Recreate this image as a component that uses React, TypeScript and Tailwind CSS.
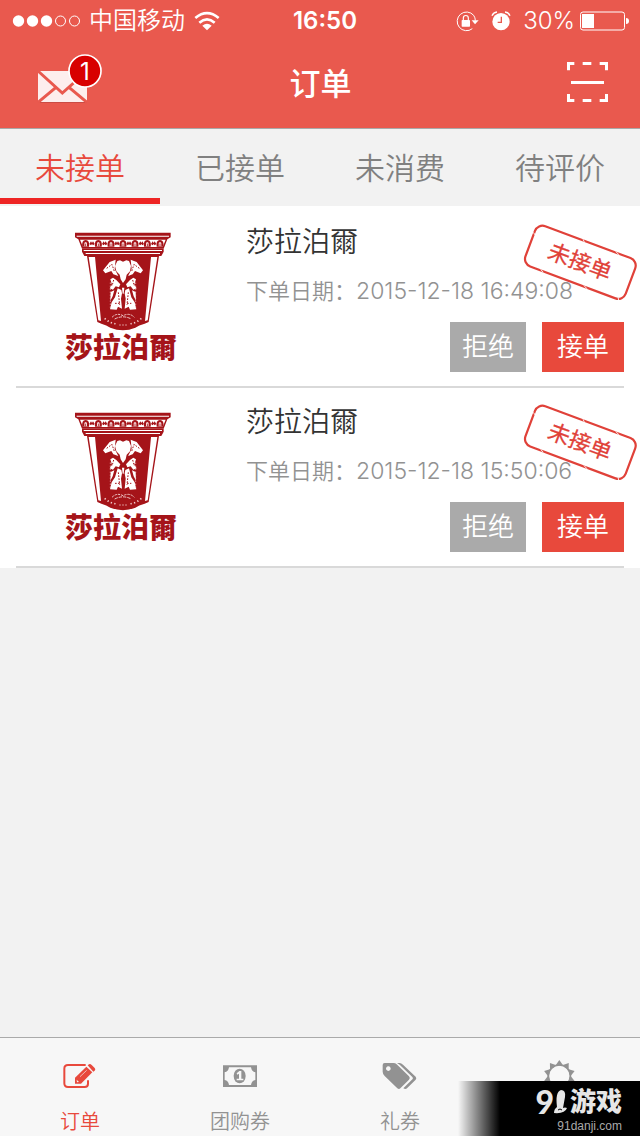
import { useState, type ReactNode } from "react";

type Order = {
  id: number;
  shop: string;
  date: string;
  status: string;
};

const orders: Order[] = [
  { id: 1, shop: "莎拉泊爾", date: "2015-12-18 16:49:08", status: "未接单" },
  { id: 2, shop: "莎拉泊爾", date: "2015-12-18 15:50:06", status: "未接单" },
];

const tabs = ["未接单", "已接单", "未消费", "待评价"];

function StatusBar() {
  return (
    <div className="grid h-10 grid-cols-[1fr_auto_1fr] items-center pl-3 pr-[10px] pt-px">
      <div className="flex items-center gap-[9px]">
        <svg width="68" height="14" viewBox="0 0 68 14" aria-hidden="true">
          <circle cx="6.5" cy="7" r="5.7" fill="#fff" />
          <circle cx="20.5" cy="7" r="5.7" fill="#fff" />
          <circle cx="34.5" cy="7" r="5.7" fill="#fff" />
          <circle cx="48.5" cy="7" r="5" fill="none" stroke="#fff" />
          <circle cx="62.5" cy="7" r="5" fill="none" stroke="#fff" />
        </svg>
        <span className="text-2xl font-[350]">中国移动</span>
        <svg width="26" height="20" viewBox="0 0 78 60" aria-hidden="true">
          <g fill="none" stroke="#fff" strokeWidth="8">
            <path d="M4 21 Q39 -8 74 21" />
            <path d="M16 35 Q39 15 62 35" />
          </g>
          <path d="M25 44 Q39 32 53 44 L39 58 Z" fill="#fff" />
        </svg>
      </div>
      <time className="pl-2 text-2xl font-semibold">16:50</time>
      <div className="flex items-center justify-end">
        <svg className="mr-3" width="24" height="22" viewBox="0 0 72 66" aria-hidden="true">
          <path d="M56 16 A28 28 0 1 0 52 56" fill="none" stroke="#fff" strokeWidth="3" />
          <path d="M56 16 Q61 23 61 32" fill="none" stroke="#fff" strokeWidth="3" />
          <path d="M50 31 H71 L60 43 Z" fill="#fff" />
          <rect x="20" y="30" width="25" height="20" rx="2" fill="#fff" />
          <path d="M25 31 V24 a7.500 7.500 0 0 1 15 0 V31" fill="none" stroke="#fff" strokeWidth="3.500" />
        </svg>
        <svg className="mr-3" width="20" height="20" viewBox="0 0 60 60" aria-hidden="true">
          <circle cx="30" cy="32" r="26" fill="#fff" />
          <path d="M3 14 Q7 4 18 3 M42 3 Q53 4 57 14" fill="none" stroke="#fff" strokeWidth="4" />
          <path d="M31 17 V34 H20" fill="none" stroke="#e9594e" strokeWidth="4" />
        </svg>
        <span className="mr-[5px] text-2xl font-[350]">30%</span>
        <svg width="50" height="20" viewBox="0 0 50 20" aria-hidden="true">
          <rect x="0.500" y="1" width="44" height="18" rx="2.500" fill="none" stroke="#fff" />
          <rect x="2" y="3" width="12" height="14" fill="#fff" />
          <path d="M46 7 Q49 7 49 10 T46 13 Z" fill="#fff" />
        </svg>
      </div>
    </div>
  );
}

function Header() {
  return (
    <header className="border-b border-[#a9a9a9] bg-[#e9594e] text-white">
      <StatusBar />
      <div className="grid h-[88px] grid-cols-[1fr_auto_1fr] items-center pl-[35px] pr-[30px]">
        <button type="button" aria-label="消息" className="justify-self-start">
          <svg width="70" height="68" viewBox="105 150 210 204">
            <rect x="116" y="215" width="145" height="94" fill="#b5453d" opacity="0.6" />
            <rect x="114" y="213" width="147" height="93" fill="#fdeeed" />
            <g fill="none" stroke="#e9594e" strokeWidth="9">
              <path d="M114 213 L187 279 L261 213" />
              <path d="M114 307 L168 262 M261 307 L207 262" />
            </g>
            <circle cx="255" cy="213" r="48" fill="#d80000" stroke="#fff" strokeWidth="5" />
            <text x="255" y="239" textAnchor="middle" fontSize="72" fontWeight="400" fill="#fff">
              1
            </text>
          </svg>
        </button>
        <h1 className="pr-1 text-[31px] font-medium">订单</h1>
        <button type="button" aria-label="扫一扫" className="justify-self-end">
          <svg width="45" height="48" viewBox="375 180 135 144">
            <g fill="none" stroke="#fff" strokeWidth="9">
              <path d="M385.500 211 V190.500 H403 M428 190.500 H454 M479 190.500 H499.500 V211" />
              <path d="M385.500 282 V301.500 H403 M428 301.500 H454 M479 301.500 H499.500 V282" />
              <path d="M393 247.500 H492" />
            </g>
          </svg>
        </button>
      </div>
    </header>
  );
}

function ShopLogo({ name }: { name: string }) {
  return (
    <svg width="140" height="150" viewBox="0 0 420 450" role="img" aria-label={name}>
      <g fill="#a51419">
        <path d="M75 38 H362 V52 L352 58 L341 86 H96 L85 58 L75 52 Z" />
        <path d="M96 86 H341 V95 L334 108 H103 L96 95 Z" />
        <path d="M111 108 H327 L296 306 L284 311 Q266 316 256 323 Q219 338 181 323 Q170 316 154 311 L142 306 Z" />
      </g>
      <g fill="#fff">
        <path d="M80 47 H357 V50 H80 Z" />
        <path d="M90 59 H347 L338 81 H99 Z" />
        <path d="M101 90 H336 V93 H101 Z" />
        <path d="M107 99 H330 V102 H107 Z" />
        <path d="M116 111 H135 L153 303 L145 301 Z" />
        <path d="M322 111 H303 L285 303 L293 301 Z" />
      </g>
      {/* frieze along the rim */}
      <g fill="#a51419">
        {[107, 145, 183, 219, 255, 292, 330].map((x) => (
          <g key={x}>
            <path d={`M${x - 10} 80 Q${x - 13} 61 ${x} 60 Q${x + 13} 61 ${x + 10} 80 Z`} />
            <path d={`M${x - 4} 79 V69 Q${x} 63 ${x + 4} 69 V79 H${x + 1} V71 H${x - 1} V79 Z`} fill="#f3d3d4" />
          </g>
        ))}
        {[126, 164, 201, 237, 274, 311].map((x) => (
          <path key={x} d={`M${x - 8} 72 L${x - 3} 64 L${x} 69 L${x + 3} 64 L${x + 8} 72 L${x + 3} 76 L${x} 72 L${x - 3} 76 Z`} />
        ))}
      </g>
      {/* engraving inside the pot */}
      <g fill="#fff">
        <path d="M202 123 L210 121 L219 125 L229 121 L237 123 L243 138 L240 154 L230 164 L227 178 L219 189 L212 178 L209 164 L199 154 L195 138 Z" />
        <path d="M197 119 L179 126 L159 151 L166 160 L184 153 L190 163 L205 168 L194 147 Z" />
        <path d="M242 119 L260 126 L279 151 L272 160 L255 153 L248 163 L234 168 L245 147 Z" />
        <path d="M181 178 L189 173 L199 180 L211 193 L207 202 L197 199 L189 209 L179 205 L186 194 Z" />
        <path d="M258 178 L250 173 L240 180 L228 193 L232 202 L242 199 L250 209 L260 205 L253 194 Z" />
        <path d="M203 205 L214 210 L216 220 L213 236 L216 266 L204 260 L200 269 L180 268 L185 247 L195 232 Z" />
        <path d="M237 205 L226 210 L224 220 L227 236 L224 266 L236 260 L240 269 L259 268 L254 247 L244 232 Z" />
        <path d="M182 216 L193 211 L188 229 L181 242 Z M257 216 L246 211 L251 229 L258 242 Z" />
        <path d="M216 203 H223 L221 221 H218 Z" />
      </g>
      <g fill="none" stroke="#a51419" strokeWidth="3" strokeDasharray="5 4">
        <path d="M170 145 L186 133 L193 154 M268 145 L252 133 L245 154" />
        <path d="M191 180 L186 198 M248 180 L253 198 M205 217 L209 255 M235 217 L231 255" />
        <path d="M195 250 H209 M231 250 H244" />
      </g>
      <g fill="none" stroke="#f0c9ca" strokeWidth="3">
        <path d="M181 188 V263 M257 188 V263" strokeDasharray="3 6" />
        <path d="M186 292 Q200 277 219 287 Q239 277 253 292" strokeDasharray="7 3" />
        <path d="M194 297 Q219 284 244 297" strokeDasharray="10 3" />
        <path d="M164 295 Q181 311 203 312 M274 295 Q257 311 235 312" strokeDasharray="4 7" strokeWidth="5" />
        <path d="M208 315 H233" strokeDasharray="4 5" />
      </g>
      <text x="213" y="415" textAnchor="middle" fontSize="84" fontWeight="900" fill="#a51419">
        {name}
      </text>
    </svg>
  );
}

function Stamp({ label }: { label: string }) {
  return (
    <svg
      className="absolute right-0 top-4 text-[#e04139]"
      width="118"
      height="78"
      viewBox="0 0 118 78"
      role="img"
      aria-label={label}
    >
      <g transform="rotate(20.500 59 38)">
        <rect x="5" y="17" width="107" height="43" rx="8" fill="none" stroke="currentColor" strokeWidth="2.200" />
        {/* worn spots in the ink */}
        <path
          d="M53 16 l2 2 M88 16 l4 2 M4 27 l3 2 M70 59 l4 2 M106 58 l2 3 M24 59 l3 2"
          stroke="#fff"
          strokeWidth="0.800"
        />
        <text x="58" y="46" textAnchor="middle" fontSize="22" fontWeight="400" fill="currentColor" stroke="currentColor" strokeWidth="0.300">
          {label}
        </text>
      </g>
    </svg>
  );
}

function OrderRow({ order }: { order: Order }) {
  const { shop, date, status } = order;

  return (
    <li className="relative px-4">
      <div className="flex h-[180px] border-b-2 border-[#d9d9d9] pt-3">
        <div className="w-[230px] shrink-0 pl-[34px]">
          <ShopLogo name={shop} />
        </div>
        <div className="flex flex-1 flex-col">
          <h2 className="text-[28px] font-[350] leading-[44px] text-[#333]">{shop}</h2>
          <p className="mt-[11px] whitespace-nowrap text-[22px] font-[350] leading-8 text-[#929292]">
            下单日期：<time className="text-[23px] font-[350]">{date}</time>
          </p>
          <div className="mt-[15px] flex justify-end gap-4 text-[26px] font-[350] leading-[50px] text-white">
            <button type="button" className="w-[76px] bg-[#aaa]">
              拒绝
            </button>
            <button type="button" className="w-[82px] bg-[#e8493c]">
              接单
            </button>
          </div>
        </div>
      </div>
      <Stamp label={status} />
    </li>
  );
}

function EditIcon() {
  return (
    <svg width="36" height="36" viewBox="186 84 108 108" aria-hidden="true">
      <path
        d="M257 105 H204 Q193 105 193 116 V160 Q193 171 204 171 H254 Q264 171 264 161 V151"
        fill="none"
        stroke="currentColor"
        strokeWidth="6"
      />
      <path d="M225 161 V143 L259 110 L277 127 L243 161 Z" fill="currentColor" />
      <path d="M263 106 L267 103 Q271 101 275 105 L284 114 Q288 118 284 122 L280 125 Z" fill="currentColor" />
      <path d="M240 140 L260 121" stroke="#f7f7f7" strokeWidth="2" />
      <path d="M230 149 L237 156 L231 157 Z" fill="#f7f7f7" />
    </svg>
  );
}

function MoneyIcon() {
  return (
    <svg width="36" height="36" viewBox="666 84 108 108" aria-hidden="true">
      <path
        d="M669 106 H771 V171 H669 Z M687 112 Q685 125 674 127 V150 Q685 152 687 165 H753 Q755 152 766 150 V127 Q755 125 753 112 Z"
        fill="currentColor"
        fillRule="evenodd"
      />
      <ellipse cx="719" cy="138" rx="18" ry="22" fill="currentColor" />
      <path d="M710 130 L718 123 H724 V146 H730 V151 H710 V146 H717 V131 L712 134 Z" fill="#f7f7f7" />
    </svg>
  );
}

function TagsIcon() {
  return (
    <svg width="36" height="36" viewBox="186 84 108 108" aria-hidden="true">
      <path
        d="M194 99 H220 Q226 99 230 103 L267 139 Q272 144 267 149 L241 175 Q237 179 232 175 L194 138 Q188 132 188 125 V105 Q188 99 194 99 Z M205 109 a7 7 0 1 0 0.100 0 Z"
        fill="currentColor"
        fillRule="evenodd"
      />
      <path
        d="M231 99 H239 Q244 100 249 104 L287 140 Q291 145 287 149 L261 175 Q257 179 250 175 L278 147 Q280 144 277 141 L239 104 Z"
        fill="currentColor"
      />
    </svg>
  );
}

function SunIcon() {
  const angles = [0, 36, 72, 108, 144, 180, 216, 252, 288, 324];
  return (
    <svg width="36" height="36" viewBox="666 84 108 108" aria-hidden="true">
      <circle cx="718" cy="138" r="33" fill="none" stroke="currentColor" strokeWidth="5" />
      {angles.map((angle) => (
        <path key={angle} d="M706 107 L718 90 L730 107 Z" fill="currentColor" transform={`rotate(${angle} 718 138)`} />
      ))}
    </svg>
  );
}

function NavItem({ icon, label, active }: { icon: ReactNode; label?: string; active?: boolean }) {
  return (
    <a
      href="#"
      aria-current={active ? "page" : undefined}
      className={`flex flex-col items-center gap-[14px] pt-5 ${active ? "text-[#e8493c]" : "text-[#929292]"}`}
    >
      {icon}
      {label && <span className="text-xl font-[350] leading-7">{label}</span>}
    </a>
  );
}

function Watermark() {
  return (
    <div className="absolute bottom-0 right-0 flex h-[55px] w-[182px] flex-col items-end bg-linear-to-r from-transparent to-black to-[42px] pr-[18px] pt-[3px] text-[#e6e6e6]">
      <div className="flex items-center text-[26px] font-black leading-9">
        <span className="font-['Lato',sans-serif] text-[32px]">9</span>
        <svg className="mr-[3px]" width="13" height="24" viewBox="0 0 13 24" role="img" aria-label="1">
          <path d="M3 17 Q1 2 7 0 Q12 0 11 7 L9 18 Q11 17 13 18 Q11 24 0 23 Q0 19 3 17 Z" fill="currentColor" />
          <path d="M4 20 Q6 18 8 20" fill="none" stroke="#000" />
        </svg>
        游戏
      </div>
      <span className="font-['Liberation_Sans',sans-serif] text-xs leading-3 text-[#aaa]">91danji.com</span>
    </div>
  );
}

export default function App() {
  const [current, setCurrent] = useState(tabs[0]);

  return (
    <div className="flex min-h-screen flex-col bg-[#f2f2f2] font-['Inter','Noto_Sans_CJK_SC',sans-serif]">
      <Header />
      <div role="tablist" className="grid grid-cols-4">
        {tabs.map((tab) => (
          <button
            key={tab}
            type="button"
            role="tab"
            aria-selected={tab === current}
            onClick={() => setCurrent(tab)}
            className={`mb-0.5 h-[75px] border-b-[6px] pt-2 text-[30px] font-[350] leading-[60px] ${
              tab === current ? "border-[#ee2524] text-[#e8493c]" : "border-transparent text-[#808080]"
            }`}
          >
            {tab}
          </button>
        ))}
      </div>
      <main className="flex-1">
        <ul className="bg-white pt-0.5">
          {orders.map((order) => (
            <OrderRow key={order.id} order={order} />
          ))}
        </ul>
      </main>
      <footer className="relative border-t border-[#aaa] bg-[#f7f7f7]">
        <nav className="grid grid-cols-4">
          <NavItem icon={<EditIcon />} label="订单" active />
          <NavItem icon={<MoneyIcon />} label="团购券" />
          <NavItem icon={<TagsIcon />} label="礼券" />
          <NavItem icon={<SunIcon />} />
        </nav>
        <Watermark />
      </footer>
    </div>
  );
}
